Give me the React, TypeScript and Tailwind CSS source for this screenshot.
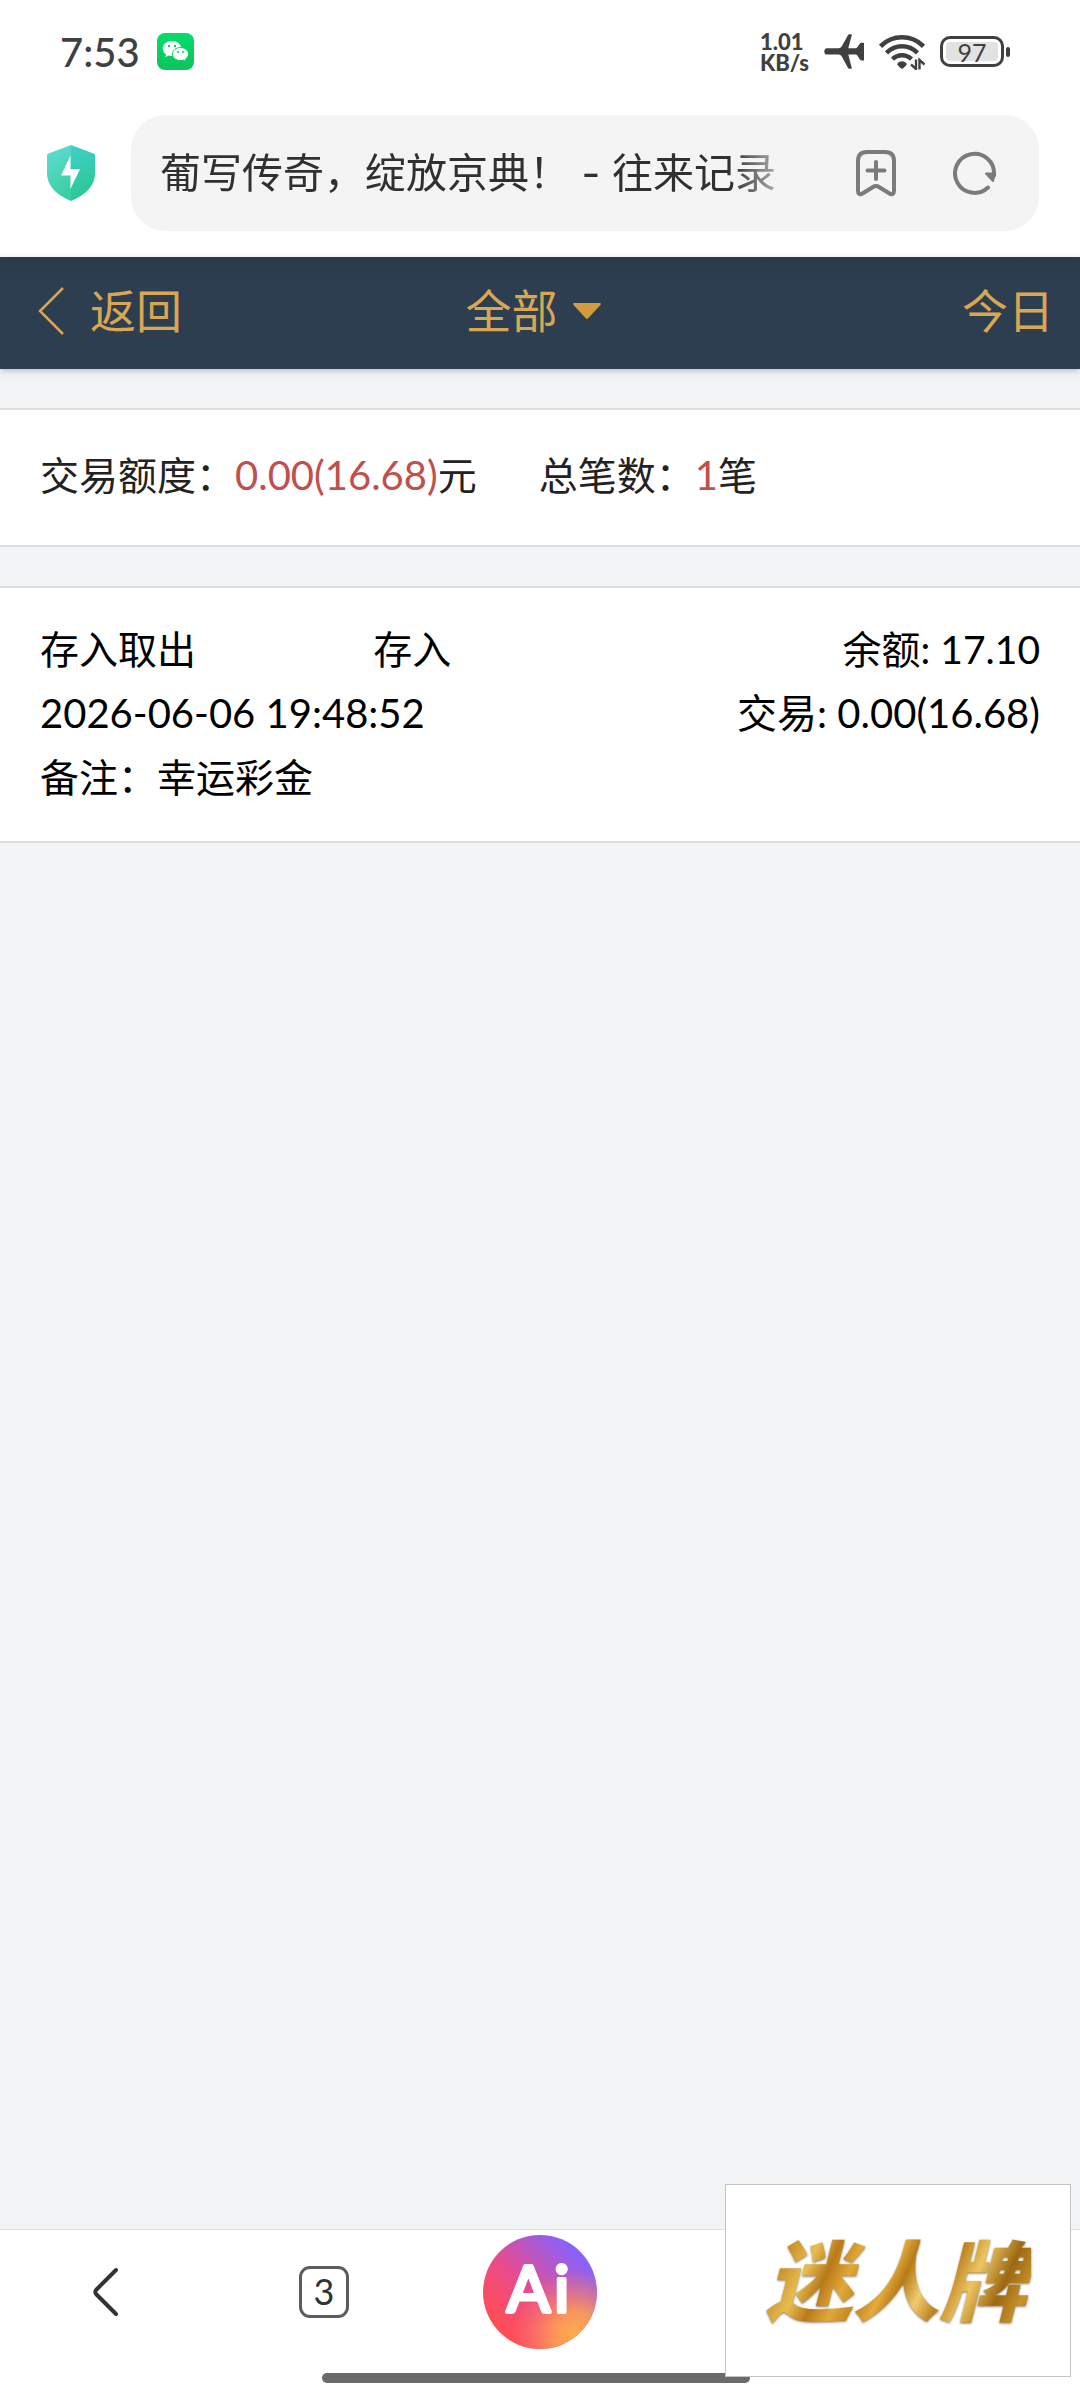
import React, { useState } from 'react';

interface TransactionRecord {
  id: number;
  category: string;
  type: string;
  time: string;
  balance: string;
  amount: string;
  remark: string;
}

const records: TransactionRecord[] = [
  {
    id: 1,
    category: '存入取出',
    type: '存入',
    time: '2026-06-06 19:48:52',
    balance: '17.10',
    amount: '0.00(16.68)',
    remark: '幸运彩金',
  },
];

const WechatIcon: React.FC = () => (
  <svg width="37" height="37" viewBox="0 0 37 37" aria-hidden="true">
    <defs>
      <linearGradient id="wechat" x1="0" y1="0" x2="0" y2="1">
        <stop offset="0" stopColor="#04dc6c" />
        <stop offset="1" stopColor="#0cc45c" />
      </linearGradient>
    </defs>
    <rect width="37" height="37" rx="8" fill="url(#wechat)" />
    <path d="M15 8C9.800 8 5.700 11.300 5.700 15.600c0 2.400 1.300 4.500 3.400 5.900l-.8 2.700 3.200-1.600c1.100.3 2.300.5 3.500.5 5.200 0 9.300-3.300 9.300-7.500S20.200 8 15 8z" fill="#fff" />
    <path d="M23.500 14.500c-4.500 0-8 2.900-8 6.500s3.500 6.600 8 6.600c1 0 2-.2 2.900-.5l2.800 1.500-.7-2.500c1.800-1.200 3-3.100 3-5.100 0-3.600-3.600-6.500-8-6.500z" fill="#fff" stroke="#07cf64" strokeWidth="1" />
    <circle cx="12" cy="13" r="1.200" fill="#07cf64" />
    <circle cx="18" cy="13" r="1.200" fill="#07cf64" />
    <circle cx="21" cy="19" r="1" fill="#07cf64" />
    <circle cx="26" cy="19" r="1" fill="#07cf64" />
  </svg>
);

const PlaneIcon: React.FC = () => (
  <svg width="40" height="36" viewBox="0 0 40 36" fill="#404040" aria-hidden="true">
    <path d="M3 14.200h11.500c1.600 0 2.500-.7 3.300-2L23.800 1.600C24.400.6 25 .3 25.800.3h1.100c.8 0 1 .4.800 1.100l-3.400 12.800h7.300c.8 0 1.300-.3 1.700-.9l2.600-3.700c.5-.7 1-.9 1.800-.9H40v17.700h-2.300c-.8 0-1.300-.2-1.800-.9L33.300 21.400c-.4-.6-.9-.9-1.700-.9h-7.300l3.400 13.200c.2.700 0 1.100-.8 1.100h-1.300c-.8 0-1.300-.3-1.800-1.300L17.800 22.500c-.8-1.300-1.700-2-3.300-2H3c-1.700 0-2.700-1.200-2.700-3.100s1-3.200 2.700-3.200z" />
  </svg>
);

const WifiIcon: React.FC = () => (
  <svg width="46" height="36" viewBox="0 0 46 36" fill="none" stroke="#404040" aria-hidden="true">
    <g strokeWidth="4.600">
      <path d="M1.500 12.300C13.500 .3 32.500 .3 44.500 12.300" />
      <path d="M7.500 18.800C16.500 10 29.500 10 38.500 18.800" />
      <path d="M13.500 25.200C19 20 27 20 32.500 25.200" />
    </g>
    <path d="M18.500 29.500c2.500-3 6.500-3 9 0 .4.500.4 1 0 1.500L24.500 34c-.9.900-2.100.9-3 0l-3-3c-.4-.5-.4-1 0-1.500z" fill="#404040" stroke="none" />
    <path d="M37 25.500V35l-5-4.500M40.500 35.500V26l5 4.500" strokeWidth="2.400" />
  </svg>
);

const BatteryIcon: React.FC = () => (
  <div className="flex items-center gap-[2px]">
    <div className="flex h-[31px] w-16 rounded-[10px] border-[3px] border-[#404040] p-[3px]">
      <span className="flex flex-1 items-center justify-center rounded-[4px] bg-[#e2e2e2] text-[25px] leading-[20px] text-[#404040]">
        97
      </span>
    </div>
    <span className="h-[10px] w-1 rounded-[2px] bg-[#404040]" />
  </div>
);

const ShieldIcon: React.FC = () => (
  <svg width="50" height="58" viewBox="0 0 50 58" aria-hidden="true">
    <defs>
      <linearGradient id="shield-left" x1="0" y1="0" x2="0.300" y2="1">
        <stop offset="0" stopColor="#62dcd6" />
        <stop offset="1" stopColor="#3dcfa4" />
      </linearGradient>
      <linearGradient id="shield-right" x1="0" y1="0" x2="0.200" y2="1">
        <stop offset="0" stopColor="#40d0c8" />
        <stop offset="1" stopColor="#2bc795" />
      </linearGradient>
    </defs>
    <path d="M25 1 2.500 9.500C1.300 10 1 10.500 1 11.500V29c0 13 9 21.500 24 28z" fill="url(#shield-left)" />
    <path d="M25 1l22.500 8.500c1.200.5 1.500 1 1.500 2V29c0 13-9 21.500-24 28z" fill="url(#shield-right)" />
    <path d="M24.500 11.500 15 31.500h9.500V45L34 25h-9.500z" fill="#fff" />
  </svg>
);

const BookmarkAddIcon: React.FC = () => (
  <svg width="42" height="48" viewBox="0 0 42 48" fill="none" stroke="#7b7b7b" strokeWidth="4" strokeLinecap="round" strokeLinejoin="round" aria-hidden="true">
    <path d="M3 12c0-6 3-9 9-9h18c6 0 9 3 9 9v30c0 3-2 4-4.500 2.500L24 38c-2-1.300-4-1.300-6 0L7.500 44.500C5 46 3 45 3 42z" />
    <path d="M21 13v17M12.500 21.500h17" />
  </svg>
);

const RefreshIcon: React.FC = () => (
  <svg width="44" height="46" viewBox="0 0 44 46" fill="none" stroke="#7b7b7b" strokeWidth="4" strokeLinecap="round" aria-hidden="true">
    <path d="M35 37.500A19.500 19.500 0 1 1 41 25" />
    <path d="M33 23.500h9l-2 7.500z" fill="#7b7b7b" stroke="#7b7b7b" strokeWidth="2" strokeLinejoin="round" />
  </svg>
);

const StatusBar: React.FC = () => (
  <div className="flex h-[103px] items-center justify-between pl-[60px] pr-[70px] text-[#404040]">
    <div className="flex items-center gap-[17px]">
      <span className="text-[40px] font-medium leading-[44px]">7:53</span>
      <WechatIcon />
    </div>
    <div className="flex items-center gap-[15px]">
      <p className="text-[22px] font-black leading-[21px]">
        1.01
        <br />
        KB/s
      </p>
      <PlaneIcon />
      <WifiIcon />
      <BatteryIcon />
    </div>
  </div>
);

const AddressBar: React.FC = () => {
  const [title, setTitle] = useState('葡写传奇，绽放京典！ - 往来记录');

  return (
    <div className="flex h-[154px] items-start gap-[35px] pl-[46px] pr-[41px] pt-3">
      <button type="button" aria-label="安全" className="flex h-[116px] items-center">
        <ShieldIcon />
      </button>
      <div className="flex h-[116px] min-w-0 flex-1 items-center rounded-[34px] bg-[#f4f4f4] pl-[29px] pr-[42px]">
        <input
          type="text"
          aria-label="网址"
          value={title}
          onChange={(e) => setTitle(e.target.value)}
          className="h-16 min-w-0 flex-1 bg-transparent font-['Inter','Noto_Sans_CJK_SC',sans-serif] text-[41px] leading-[64px] text-[#303030] outline-none [mask-image:linear-gradient(to_right,black_89%,transparent)]"
        />
        <div className="ml-[53px] flex items-center gap-14">
          <button type="button" aria-label="添加书签">
            <BookmarkAddIcon />
          </button>
          <button type="button" aria-label="刷新">
            <RefreshIcon />
          </button>
        </div>
      </div>
    </div>
  );
};

const PageHeader: React.FC = () => (
  <header className="relative flex h-28 items-center bg-[#2d3e50] bg-linear-to-b from-[#2a3a48] to-[#2d3e50] to-20% px-[26px] pb-1 text-[46px] leading-[64px] text-[#d9a652] shadow-[0_2px_6px_rgba(45,80,100,0.3)]">
    <div className="flex flex-1">
      <a href="#back" className="flex items-center gap-[26px] pl-3">
        <svg width="26" height="48" viewBox="0 0 26 48" fill="none" stroke="currentColor" strokeWidth="2.500" aria-hidden="true">
          <path d="M25 1 2 24l23 23" />
        </svg>
        返回
      </a>
    </div>
    <div className="relative">
      <select aria-label="交易类型" className="h-16 w-[149px] appearance-none bg-transparent leading-[64px] outline-none">
        <option>全部</option>
      </select>
      <svg width="28" height="16" viewBox="0 0 28 16" fill="#d29b3c" className="pointer-events-none absolute right-[14px] top-6" aria-hidden="true">
        <path d="M1.500 0h25c1.200 0 1.700 1 1 2L15.200 15.300c-.8.800-1.600.8-2.400 0L.5 2C-.200 1 .300 0 1.500 0z" />
      </svg>
    </div>
    <div className="flex flex-1 justify-end">
      <button type="button">今日</button>
    </div>
  </header>
);

const Summary: React.FC = () => (
  <section className="flex gap-[62px] border-y-2 border-[#dcdddf] bg-white px-10 pb-[38px] pt-[33px] text-[39px] leading-[64px] text-[#222]">
    <p>
      交易额度：<span className="text-[40px] text-[#c0504d]">0.00(16.68)</span>元
    </p>
    <p>
      总笔数：<span className="text-[40px] text-[#c0504d]">1</span>笔
    </p>
  </section>
);

const RecordItem: React.FC<{ record: TransactionRecord }> = ({ record }) => (
  <li className="border-y-2 border-[#dcdddf] bg-white px-10 pb-8 pt-[29px] text-[39px] leading-[64px] text-black">
    <div className="grid grid-cols-3">
      <span>{record.category}</span>
      <span>{record.type}</span>
      <span className="text-right">余额: {record.balance}</span>
    </div>
    <div className="flex justify-between text-[40px]">
      <time>{record.time}</time>
      <span>交易: {record.amount}</span>
    </div>
    <p>备注：{record.remark}</p>
  </li>
);

const BottomNav: React.FC = () => (
  <nav className="flex h-[171px] flex-col items-center border-t border-[#dfdfdf] bg-white pt-[5px]">
    <div className="grid h-[114px] w-full grid-cols-5 items-center justify-items-center">
      <button type="button" aria-label="后退">
        <svg width="34" height="54" viewBox="0 0 34 54" fill="none" stroke="#333" strokeWidth="4" strokeLinecap="round" strokeLinejoin="round" aria-hidden="true">
          <path d="M25 5 5.500 24.500Q3 27 5.500 29.500L25 49" />
        </svg>
      </button>
      <button
        type="button"
        aria-label="标签页"
        className="flex h-[52px] w-[50px] items-center justify-center rounded-[11px] border-[3px] border-[#5c5c5c] pb-[2px] text-[36px] leading-[40px] text-[#333]"
      >
        3
      </button>
      <button type="button" aria-label="AI 助手">
        <svg width="114" height="114" viewBox="0 0 114 114" aria-hidden="true">
          <defs>
            <linearGradient id="ai-base" x1="0.100" y1="0.750" x2="0.800" y2="0.100">
              <stop offset="0" stopColor="#ff4d55" />
              <stop offset="0.400" stopColor="#ea4b8c" />
              <stop offset="1" stopColor="#8463ff" />
            </linearGradient>
            <radialGradient id="ai-glow" cx="0.820" cy="0.880" r="0.580">
              <stop offset="0" stopColor="#ffad4a" />
              <stop offset="0.350" stopColor="#ffa250" stopOpacity="0.850" />
              <stop offset="1" stopColor="#ff7a60" stopOpacity="0" />
            </radialGradient>
          </defs>
          <circle cx="57" cy="57" r="57" fill="url(#ai-base)" />
          <circle cx="57" cy="57" r="57" fill="url(#ai-glow)" />
          <text
            x="55"
            y="77"
            textAnchor="middle"
            fill="#fff"
            stroke="#fff"
            strokeWidth="4"
            strokeLinejoin="round"
            className="font-['Lato',sans-serif] text-[64px]"
          >
            A<tspan dx="4">i</tspan>
          </text>
        </svg>
      </button>
    </div>
    <div className="mr-2 mt-6 h-[10px] w-[428px] rounded-full bg-[#6a6a6a]" />
  </nav>
);

const FloatingAd: React.FC = () => (
  <a
    href="#promo"
    className="fixed bottom-[23px] right-[9px] flex h-[193px] w-[346px] items-center justify-center border border-[#c3c4c6] bg-white pr-1"
  >
    <span className="bg-[linear-gradient(115deg,#a8720f_0%,#b87d18_8%,#e8bd50_20%,#b9791a_27%,#e0a838_34%,#c08420_41%,#e3ac3c_47%,#b67a18_52%,#f0cb70_59%,#bd8220_66%,#edc560_74%,#9c6812_84%,#c8922c_92%,#a06c14_100%)] bg-clip-text px-1 text-[87px] font-black italic leading-[110px] text-transparent drop-shadow-[0_1px_1px_rgba(90,60,10,0.7)]">
      迷人牌
    </span>
  </a>
);

export default function App() {
  return (
    <div lang="zh-CN" className="flex min-h-screen flex-col bg-[#f2f3f5] font-['Lato','Noto_Sans_CJK_SC',sans-serif]">
      <div className="bg-white">
        <StatusBar />
        <AddressBar />
      </div>
      <PageHeader />
      <main className="flex flex-1 flex-col gap-[39px] pt-[39px]">
        <Summary />
        <ul>
          {records.map((record) => (
            <RecordItem key={record.id} record={record} />
          ))}
        </ul>
      </main>
      <BottomNav />
      <FloatingAd />
    </div>
  );
}
